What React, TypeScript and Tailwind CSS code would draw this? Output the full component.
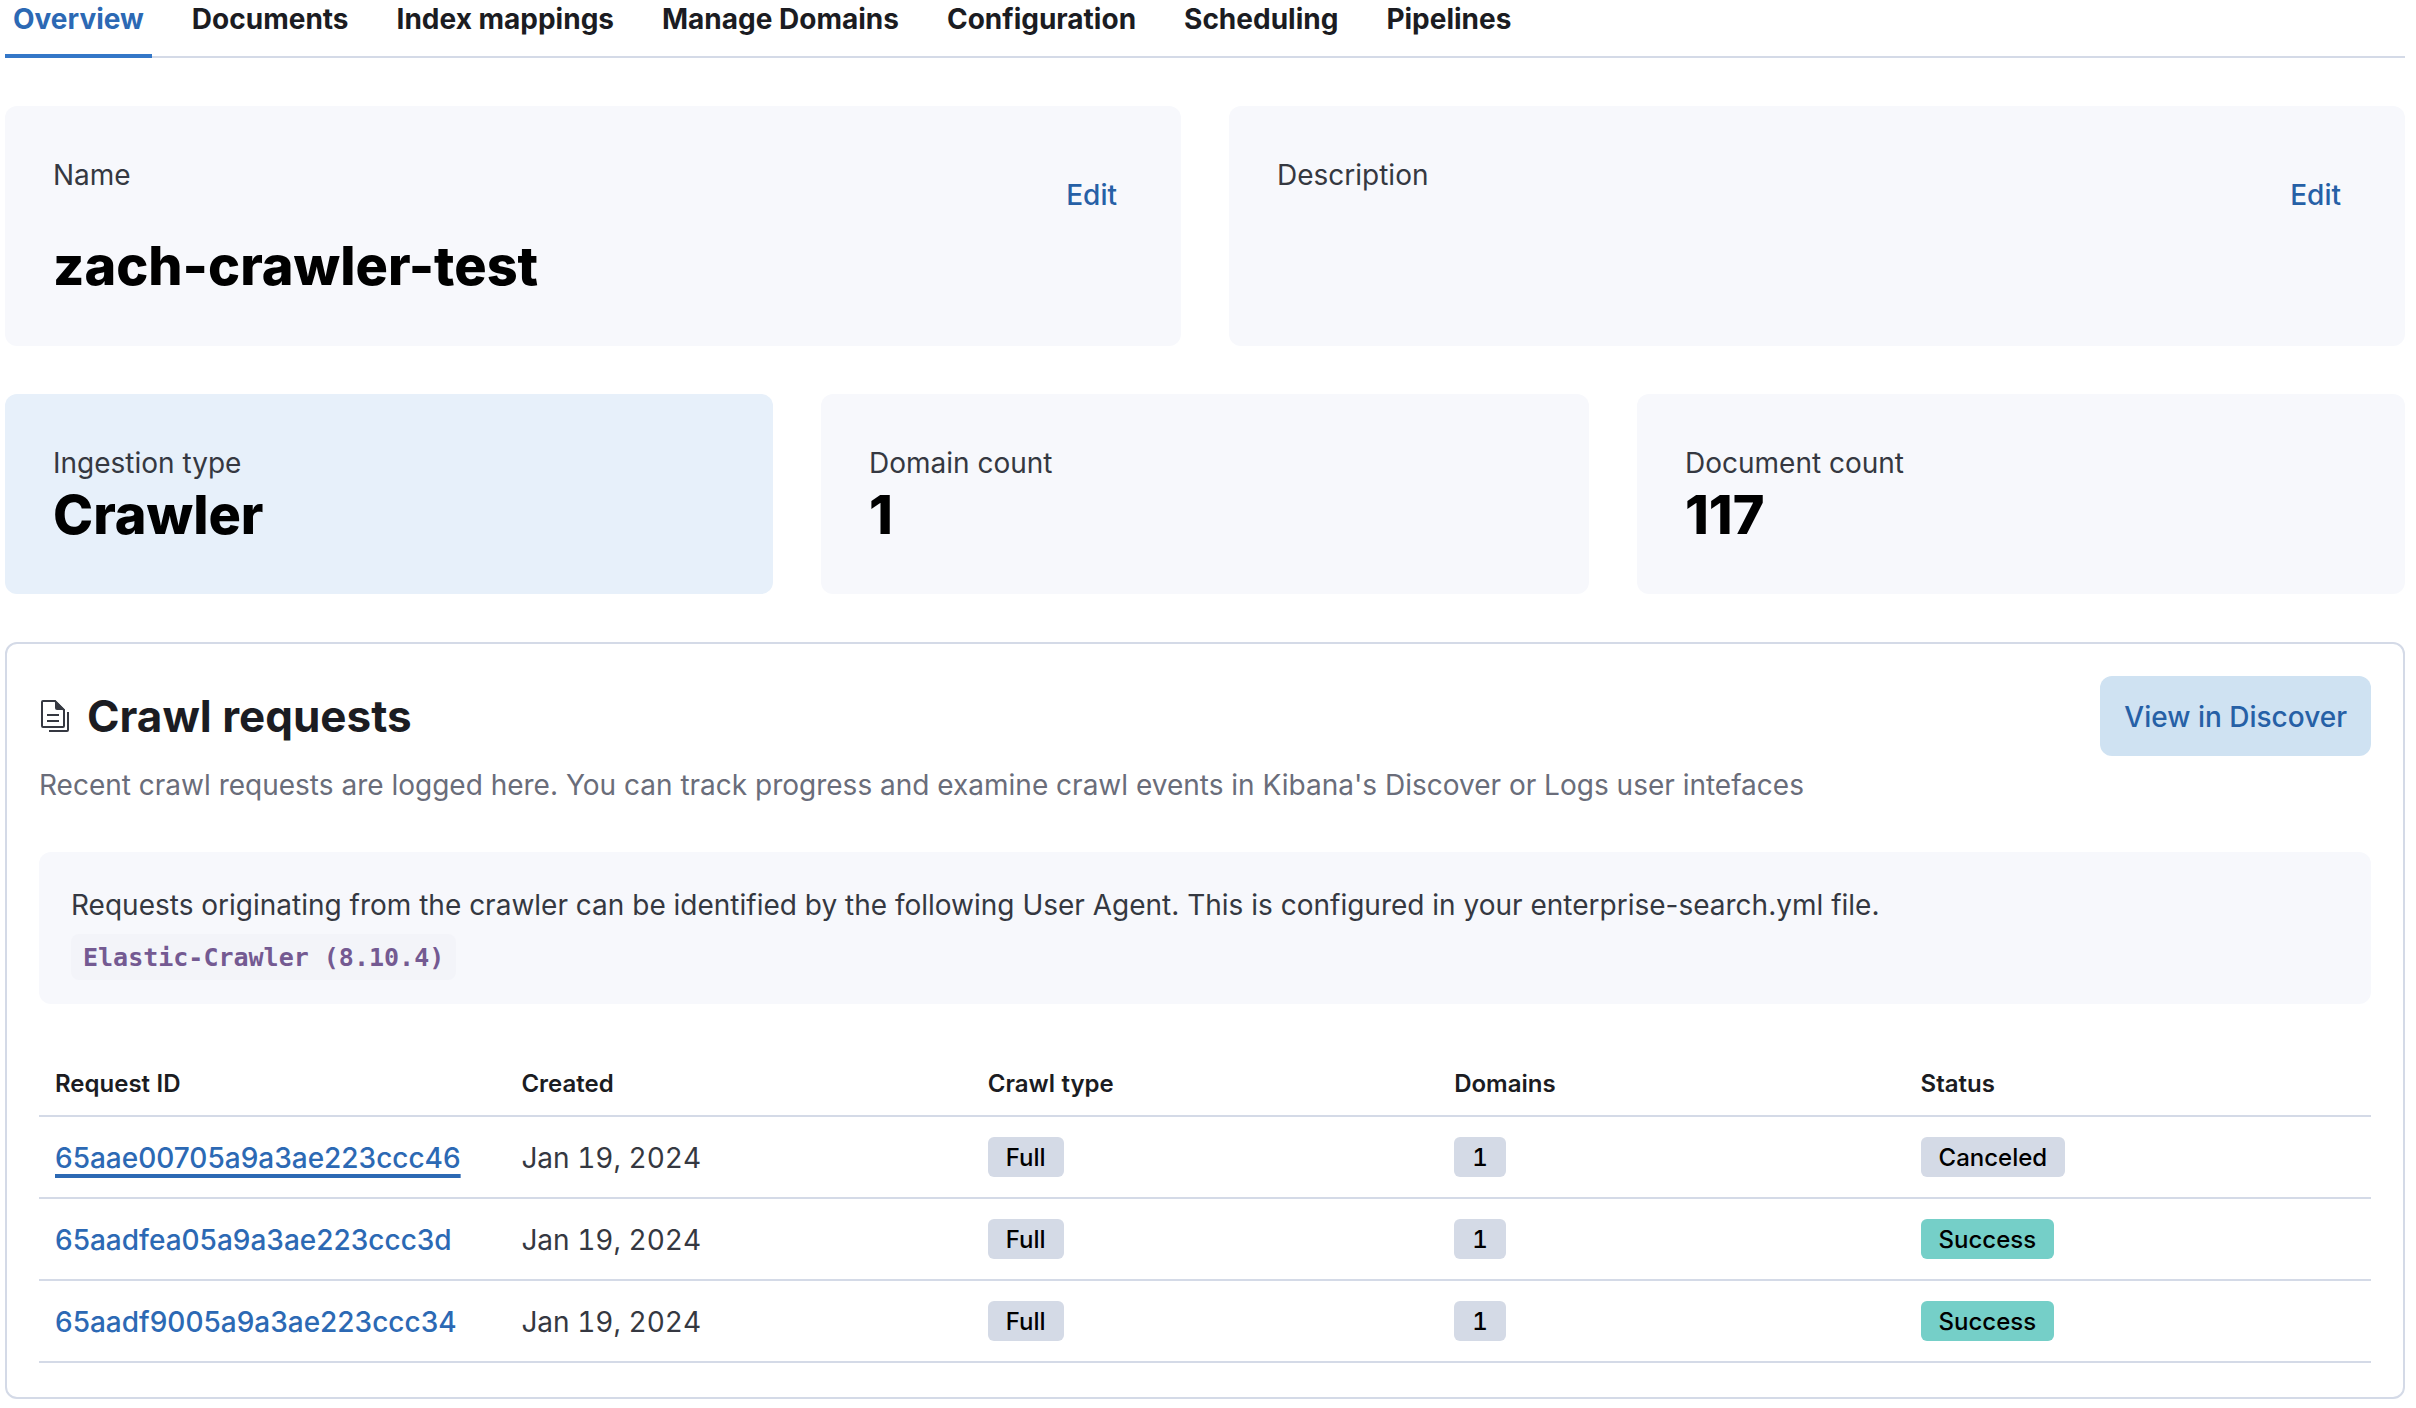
import React from "react";

const tabs = [
  "Overview",
  "Documents",
  "Index mappings",
  "Manage Domains",
  "Configuration",
  "Scheduling",
  "Pipelines",
];

const requests = [
  { id: "65aae00705a9a3ae223ccc46", created: "Jan 19, 2024", type: "Full", domains: 1, status: "Canceled", focused: true },
  { id: "65aadfea05a9a3ae223ccc3d", created: "Jan 19, 2024", type: "Full", domains: 1, status: "Success", focused: false },
  { id: "65aadf9005a9a3ae223ccc34", created: "Jan 19, 2024", type: "Full", domains: 1, status: "Success", focused: false },
];

const columns = ["Request ID", "Created", "Crawl type", "Domains", "Status"];

function Tabs() {
  return (
    <nav className="flex gap-8 border-b-2 border-[#d4dae7]">
      {tabs.map((tab, i) => (
        <button
          key={tab}
          type="button"
          aria-current={i === 0 ? "page" : undefined}
          className={
            i === 0
              ? "-mb-0.5 border-b-4 border-[#3477c8] px-2 pb-4 text-[28px] leading-[38px] font-bold text-[#2c69b4]"
              : "-mb-0.5 border-b-4 border-transparent px-2 pb-4 text-[28px] leading-[38px] font-bold text-[#1b1c22]"
          }
        >
          {tab}
        </button>
      ))}
    </nav>
  );
}

function EditableCard({ label, value }: { label: string; value?: string }) {
  return (
    <section className="min-h-60 rounded-xl bg-[#f7f8fc] p-12">
      <div className="flex items-start justify-between">
        <h2 className="text-[28px] leading-[42px] text-[#353841]">{label}</h2>
        <button type="button" className="h-20 px-4 pt-0.5 text-[28px] font-medium text-[#2660a6]">
          Edit
        </button>
      </div>
      {value && <p className="text-[54px] leading-[64px] font-extrabold text-black">{value}</p>}
    </section>
  );
}

function Stat({ label, value, highlighted }: { label: string; value: string; highlighted?: boolean }) {
  return (
    <section className={highlighted ? "rounded-xl bg-[#e7f0fa] p-12" : "rounded-xl bg-[#f7f8fc] p-12"}>
      <h2 className="text-[28px] leading-[42px] text-[#353841]">{label}</h2>
      <p className="text-[54px] leading-[62px] font-extrabold text-black">{value}</p>
    </section>
  );
}

function Badge({ children, success }: { children: React.ReactNode; success?: boolean }) {
  return (
    <span
      className={
        success
          ? "block w-fit rounded-md bg-[#75cfc8] px-[18px] pt-0.5 text-2xl leading-[38px] font-medium text-black"
          : "block w-fit rounded-md bg-[#d4dae6] px-[18px] pt-0.5 text-2xl leading-[38px] font-medium text-black"
      }
    >
      {children}
    </span>
  );
}

function DocumentsIcon() {
  return (
    <svg viewBox="0 0 32 32" className="size-8 shrink-0" fill="none" aria-hidden="true">
      <path d="M16 1H4a1 1 0 0 0-1 1v24a1 1 0 0 0 1 1h20a1 1 0 0 0 1-1V10L16 1Z" stroke="#353841" strokeWidth="2" />
      <path d="M16 0v8a2 2 0 0 0 2 2h8L16 0Z" fill="#353841" />
      <path d="M8 15h12M8 21h12M29 12v18a1 1 0 0 1-1 1H10" stroke="#353841" strokeWidth="2" />
    </svg>
  );
}

function RequestsTable() {
  return (
    <table className="mt-12 w-full table-fixed border-collapse text-left tabular-nums">
      <thead>
        <tr className="h-16 border-b-2 border-[#d4dae7]">
          {columns.map((column) => (
            <th key={column} scope="col" className="px-4 text-2xl font-semibold text-[#1b1c22]">
              {column}
            </th>
          ))}
        </tr>
      </thead>
      <tbody>
        {requests.map((request) => (
          <tr key={request.id} className="h-[82px] border-b-2 border-[#d4dae7]">
            <td className="px-4 pt-0.5 text-[28px] leading-10 font-medium normal-nums">
              <a
                href={"#" + request.id}
                className={
                  request.focused
                    ? "text-[#2c69b4] underline decoration-4 underline-offset-[6px] [text-decoration-skip-ink:none]"
                    : "text-[#2c69b4]"
                }
              >
                {request.id}
              </a>
            </td>
            <td className="px-4 pt-0.5 text-[28px] leading-10 text-[#353841]">{request.created}</td>
            <td className="px-4">
              <Badge>{request.type}</Badge>
            </td>
            <td className="px-4">
              <Badge>{request.domains}</Badge>
            </td>
            <td className="px-4">
              <Badge success={request.status === "Success"}>{request.status}</Badge>
            </td>
          </tr>
        ))}
      </tbody>
    </table>
  );
}

export default function App() {
  return (
    <main className="min-h-screen bg-white pr-[11px] pb-2.5 pl-[5px] font-['Inter',sans-serif]">
      <Tabs />
      <div className="mt-12 grid grid-cols-2 gap-12">
        <EditableCard label="Name" value="zach-crawler-test" />
        <EditableCard label="Description" />
      </div>
      <div className="mt-12 grid grid-cols-3 gap-12">
        <Stat label="Ingestion type" value="Crawler" highlighted />
        <Stat label="Domain count" value="1" />
        <Stat label="Document count" value="117" />
      </div>
      <section className="mt-12 rounded-xl border-2 border-[#d4dae7] px-8 pt-8 pb-[34px]">
        <div className="flex items-center gap-4">
          <DocumentsIcon />
          <h2 className="grow text-[44px] font-bold text-[#1b1c22]">Crawl requests</h2>
          <button
            type="button"
            className="h-20 rounded-xl bg-[#cfe2f2] px-6 pt-0.5 text-[28px] font-medium text-[#2660a6]"
          >
            View in Discover
          </button>
        </div>
        <p className="mt-2 text-[28px] leading-[42px] text-[#6a6d7a]">
          Recent crawl requests are logged here. You can track progress and examine crawl events in Kibana's Discover
          or Logs user intefaces
        </p>
        <div className="mt-[46px] rounded-xl bg-[#f7f8fc] px-8 pt-8 pb-6">
          <p className="text-[28px] leading-[42px] text-[#353841]">
            Requests originating from the crawler can be identified by the following User Agent. This is configured in
            your enterprise-search.yml file.
          </p>
          <code className="mt-2 block w-fit rounded-lg bg-[#f3f4f9] px-3 pt-0.5 font-['DejaVu_Sans_Mono',monospace] text-[25px] leading-[44px] font-bold text-[#745a92]">
            Elastic-Crawler (8.10.4)
          </code>
        </div>
        <RequestsTable />
      </section>
    </main>
  );
}
